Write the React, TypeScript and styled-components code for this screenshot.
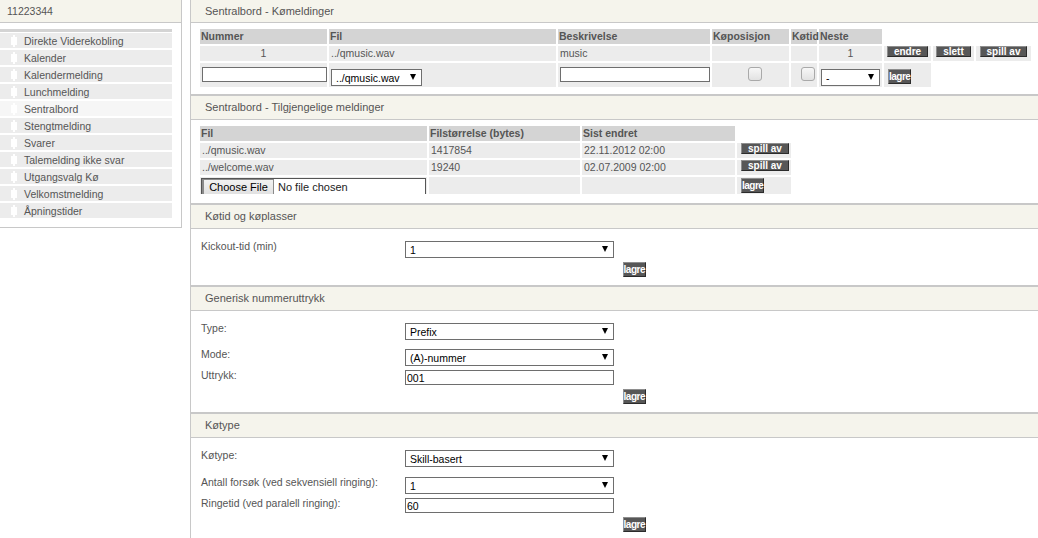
import React from 'react';
import styled, { createGlobalStyle } from 'styled-components';

const FONT = `"Liberation Sans", Arial, sans-serif`;

const GlobalStyle = createGlobalStyle`
  *, *::before, *::after { box-sizing: border-box; }
  html, body { margin: 0; padding: 0; overflow: hidden; background: #fff; }
  body { font-family: ${FONT}; font-size: 10.5px; color: #555; }
`;

const Page = styled.div`
  display: flex;
  align-items: flex-start;
  width: 100%;
`;

/* ---------- Sidebar ---------- */
const Sidebar = styled.aside`
  flex: 0 0 182px;
  border-right: 1px solid #c8c8c8;
  border-bottom: 1px solid #c8c8c8;
  padding-bottom: 7px;
  margin-right: 8px;
`;

const SideHeader = styled.div`
  height: 23px;
  line-height: 22px;
  padding-left: 7px;
  background: #f5f4ec;
  border-bottom: 1px solid #c8c8c8;
  font-size: 10.5px;
  color: #555;
`;

const NavList = styled.ul`
  list-style: none;
  margin: 6px 0 0;
  padding: 1px 0 0;
  width: 172px;
  border-top: 3px solid #d4d4d4;
`;

const NavItem = styled.li<{ $active?: boolean }>`
  display: flex;
  align-items: center;
  height: 15px;
  margin-bottom: 2px;
  padding-left: 11px;
  background: ${p => (p.$active ? '#f6f6f6' : '#ececec')};
  color: #555;
  font-size: 10.5px;
  white-space: nowrap;
`;

const NavIcon = styled.svg`
  flex: none;
  margin-right: 7px;
`;

/* ---------- Main ---------- */
const Main = styled.main`
  flex: 1 1 auto;
  min-width: 0;
  border-left: 1px solid #c8c8c8;
`;

const Panel = styled.section<{ $first?: boolean }>`
  border-top: ${p => (p.$first ? '0' : '2px solid #c8c8c8')};
`;

const PanelHeader = styled.div<{ $first?: boolean }>`
  height: ${p => (p.$first ? 23 : 24)}px;
  line-height: ${p => (p.$first ? 22 : 23)}px;
  padding-left: 14px;
  background: #f5f4ec;
  border-bottom: 1px solid #c8c8c8;
  font-size: 11px;
  color: #555;
`;

const TableBody = styled.div<{ $pb: number }>`
  padding: 4px 0 ${p => p.$pb}px 7px;
`;

const FormBody = styled.div`
  padding: 12px 0 8px 10px;
`;

const DataTable = styled.table<{ $w: number }>`
  border-collapse: separate;
  border-spacing: 2px;
  table-layout: fixed;
  width: ${p => p.$w}px;
`;

const Col = styled.col<{ $w: number }>`
  width: ${p => p.$w}px;
`;

const Tr = styled.tr<{ $h: number }>`
  height: ${p => p.$h}px;
`;

const Th = styled.th`
  background: #d4d4d4;
  text-align: left;
  font-weight: bold;
  font-size: 10.5px;
  color: #555;
  padding: 0 1px;
  line-height: 15px;
  white-space: nowrap;
`;

const Td = styled.td<{ $align?: 'left' | 'center'; $top?: number; $pl?: number }>`
  background: #ececec;
  padding: ${p => p.$top ?? 0}px 2px 0 ${p => p.$pl ?? 2}px;
  vertical-align: ${p => (p.$top !== undefined ? 'top' : 'middle')};
  text-align: ${p => p.$align ?? 'left'};
  color: #555;
  font-size: 10.5px;
  line-height: 15px;
  white-space: nowrap;
`;

const ActionButton = styled.button<{ $compact?: boolean }>`
  display: inline-flex;
  align-items: center;
  justify-content: center;
  vertical-align: top;
  height: ${p => (p.$compact ? 15 : 11)}px;
  margin: 0;
  padding: ${p => (p.$compact ? '0' : '0 6px')};
  border: 1px solid;
  border-color: #8e8e8e #2b2b2b #2b2b2b #8e8e8e;
  background: #575757;
  color: #fff;
  font-family: ${FONT};
  font-weight: bold;
  font-size: 10px;
  line-height: 1;
  letter-spacing: ${p => (p.$compact ? '-0.5px' : '0')};
  white-space: nowrap;
  cursor: pointer;
`;

const TextField = styled.input<{ $w: number }>`
  display: block;
  width: ${p => p.$w}px;
  height: 15px;
  margin: 0;
  padding: 0 1px;
  border: 1px solid #6e6e6e;
  background: #fff;
  font-family: ${FONT};
  font-size: 10.5px;
  color: #000;
  outline: none;
`;

const Checkbox = styled.input`
  appearance: none;
  -webkit-appearance: none;
  display: inline-block;
  vertical-align: top;
  width: 14px;
  height: 14px;
  margin: 0 0 0 8px;
  border: 1px solid #a9a9a9;
  border-radius: 3px;
  background: linear-gradient(#f7f7f7, #e2e2e2);
`;

const SelectFrame = styled.div<{ $w: number }>`
  position: relative;
  width: ${p => p.$w}px;
  height: 17px;
  border: 1px solid #6e6e6e;
  background: #fff;
`;

const NativeSelect = styled.select`
  appearance: none;
  -webkit-appearance: none;
  display: block;
  width: 100%;
  height: 100%;
  margin: 0;
  padding: 0 14px 0 4px;
  border: 0;
  background: transparent;
  font-family: ${FONT};
  font-size: 10.5px;
  color: #000;
  outline: none;
`;

const SelectArrow = styled.svg`
  position: absolute;
  right: 5px;
  top: 4px;
  pointer-events: none;
`;

const FileBox = styled.div`
  display: flex;
  width: 225px;
  height: 16px;
  border: 1px solid #555;
  border-bottom: 0;
  background: #fff;
  overflow: hidden;
`;

const FileButton = styled.span`
  flex: none;
  width: 72px;
  height: 22px;
  padding-top: 1px;
  border: 1px solid #8a8a8a;
  border-left-width: 2px;
  background: linear-gradient(#f2f2f2, #dadada);
  text-align: center;
  font-size: 11px;
  line-height: 13px;
  color: #000;
`;

const FileText = styled.span`
  padding: 2px 0 0 4px;
  font-size: 11px;
  line-height: 13px;
  color: #222;
`;

const FormBlock = styled.div`
  width: 445px;
`;

const FormRow = styled.div<{ $gap?: number }>`
  display: flex;
  align-items: flex-start;
  margin-bottom: ${p => p.$gap ?? 4}px;
`;

const Label = styled.div`
  flex: 0 0 204px;
  line-height: 11px;
  font-size: 10.5px;
  color: #555;
`;

const ButtonRow = styled.div`
  display: flex;
  justify-content: flex-end;
`;

function Dropdown({ w, value }: { w: number; value: string }) {
  return (
    <SelectFrame $w={w}>
      <NativeSelect defaultValue={value}>
        <option value={value}>{value}</option>
      </NativeSelect>
      <SelectArrow width="6" height="6" viewBox="0 0 6 6">
        <polygon points="0,0 6,0 3,6" fill="#000" />
      </SelectArrow>
    </SelectFrame>
  );
}

const navItems = [
  'Direkte Viderekobling',
  'Kalender',
  'Kalendermelding',
  'Lunchmelding',
  'Sentralbord',
  'Stengtmelding',
  'Svarer',
  'Talemelding ikke svar',
  'Utgangsvalg Kø',
  'Velkomstmelding',
  'Åpningstider',
];

const files = [
  { name: '../qmusic.wav', size: '1417854', date: '22.11.2012 02:00' },
  { name: '../welcome.wav', size: '19240', date: '02.07.2009 02:00' },
];

export default function App() {
  return (
    <>
      <GlobalStyle />
      <Page>
        <Sidebar>
          <SideHeader>11223344</SideHeader>
          <NavList>
            {navItems.map(item => (
              <NavItem key={item} $active={item === 'Sentralbord'}>
                <NavIcon width="6" height="12" viewBox="0 0 6 12">
                  <path d="M2 0H4V2H6V10H4V12H2V10H0V2H2Z" fill="#fff" />
                </NavIcon>
                {item}
              </NavItem>
            ))}
          </NavList>
        </Sidebar>

        <Main>
          <Panel $first>
            <PanelHeader $first>Sentralbord - Kømeldinger</PanelHeader>
            <TableBody $pb={5}>
              <DataTable $w={835}>
                <colgroup>
                  {[127, 227, 152, 77, 26, 63, 47, 41, 55].map((w, i) => (
                    <Col key={i} $w={w} />
                  ))}
                </colgroup>
                <thead>
                  <Tr $h={15}>
                    <Th>Nummer</Th>
                    <Th>Fil</Th>
                    <Th>Beskrivelse</Th>
                    <Th>Køposisjon</Th>
                    <Th>Køtid</Th>
                    <Th>Neste</Th>
                  </Tr>
                </thead>
                <tbody>
                  <Tr $h={15}>
                    <Td $align="center">1</Td>
                    <Td>../qmusic.wav</Td>
                    <Td>music</Td>
                    <Td />
                    <Td />
                    <Td $align="center">1</Td>
                    <Td $align="center"><ActionButton>endre</ActionButton></Td>
                    <Td $align="center"><ActionButton>slett</ActionButton></Td>
                    <Td $align="center"><ActionButton>spill av</ActionButton></Td>
                  </Tr>
                  <Tr $h={24}>
                    <Td $top={4}><TextField $w={125} /></Td>
                    <Td $top={6}><Dropdown w={91} value="../qmusic.wav" /></Td>
                    <Td $top={4}><TextField $w={150} /></Td>
                    <Td $top={4} $align="center"><Checkbox type="checkbox" /></Td>
                    <Td $top={4} $align="center"><Checkbox type="checkbox" /></Td>
                    <Td $top={6}><Dropdown w={59} value="-" /></Td>
                    <Td $top={6} $pl={4}><ActionButton $compact>lagre</ActionButton></Td>
                  </Tr>
                </tbody>
              </DataTable>
            </TableBody>
          </Panel>

          <Panel>
            <PanelHeader>Sentralbord - Tilgjengelige meldinger</PanelHeader>
            <TableBody $pb={7}>
              <DataTable $w={595}>
                <colgroup>
                  {[227, 151, 153, 54].map((w, i) => (
                    <Col key={i} $w={w} />
                  ))}
                </colgroup>
                <thead>
                  <Tr $h={15}>
                    <Th>Fil</Th>
                    <Th>Filstørrelse (bytes)</Th>
                    <Th>Sist endret</Th>
                  </Tr>
                </thead>
                <tbody>
                  {files.map(f => (
                    <Tr $h={15} key={f.name}>
                      <Td>{f.name}</Td>
                      <Td>{f.size}</Td>
                      <Td>{f.date}</Td>
                      <Td $pl={4}><ActionButton>spill av</ActionButton></Td>
                    </Tr>
                  ))}
                  <Tr $h={17}>
                    <Td $top={1} $pl={1}>
                      <FileBox>
                        <FileButton>Choose File</FileButton>
                        <FileText>No file chosen</FileText>
                      </FileBox>
                    </Td>
                    <Td />
                    <Td />
                    <Td $top={1} $pl={4}><ActionButton $compact>lagre</ActionButton></Td>
                  </Tr>
                </tbody>
              </DataTable>
            </TableBody>
          </Panel>

          <Panel>
            <PanelHeader>Køtid og køplasser</PanelHeader>
            <FormBody>
              <FormBlock>
                <FormRow>
                  <Label>Kickout-tid (min)</Label>
                  <Dropdown w={209} value="1" />
                </FormRow>
                <ButtonRow><ActionButton $compact>lagre</ActionButton></ButtonRow>
              </FormBlock>
            </FormBody>
          </Panel>

          <Panel>
            <PanelHeader>Generisk nummeruttrykk</PanelHeader>
            <FormBody>
              <FormBlock>
                <FormRow $gap={9}>
                  <Label>Type:</Label>
                  <Dropdown w={209} value="Prefix" />
                </FormRow>
                <FormRow>
                  <Label>Mode:</Label>
                  <Dropdown w={209} value="(A)-nummer" />
                </FormRow>
                <FormRow>
                  <Label>Uttrykk:</Label>
                  <TextField $w={209} defaultValue="001" />
                </FormRow>
                <ButtonRow><ActionButton $compact>lagre</ActionButton></ButtonRow>
              </FormBlock>
            </FormBody>
          </Panel>

          <Panel>
            <PanelHeader>Køtype</PanelHeader>
            <FormBody>
              <FormBlock>
                <FormRow $gap={10}>
                  <Label>Køtype:</Label>
                  <Dropdown w={209} value="Skill-basert" />
                </FormRow>
                <FormRow>
                  <Label>Antall forsøk (ved sekvensiell ringing):</Label>
                  <Dropdown w={209} value="1" />
                </FormRow>
                <FormRow>
                  <Label>Ringetid (ved paralell ringing):</Label>
                  <TextField $w={209} defaultValue="60" />
                </FormRow>
                <ButtonRow><ActionButton $compact>lagre</ActionButton></ButtonRow>
              </FormBlock>
            </FormBody>
          </Panel>
        </Main>
      </Page>
    </>
  );
}
